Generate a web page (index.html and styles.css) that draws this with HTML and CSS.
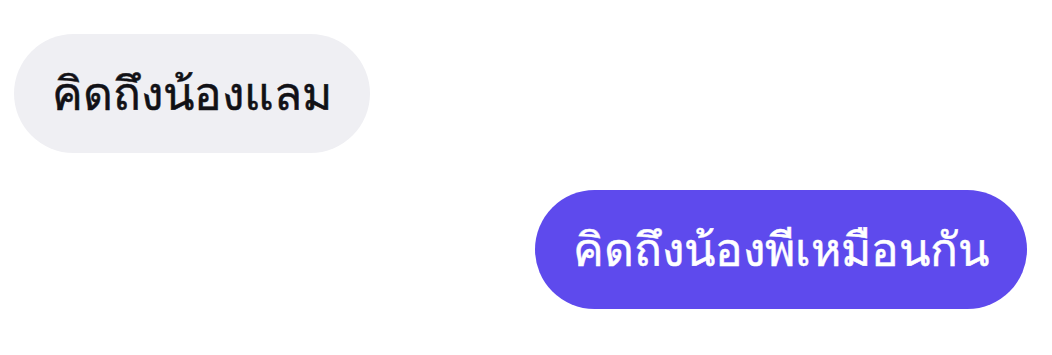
FILE: index.html
```html
<!DOCTYPE html>
<html lang="th">
<head>
    <meta charset="UTF-8">
    <meta name="viewport" content="width=device-width, initial-scale=1.0">
    <title>แชท</title>
    <link rel="stylesheet" href="styles.css">
</head>
<body>
    <div class="chat">
        <div class="msg msg-in">
            <div class="bubble">คิดถึงน้องแลม</div>
        </div>
        <div class="msg msg-out">
            <div class="bubble">คิดถึงน้องพีเหมือนกัน</div>
        </div>
    </div>
</body>
</html>
```

FILE: styles.css
```css
:root {
    --in-bg: #efeff3;
    --in-fg: #111116;
    --out-bg: #5e4aed;
    --out-fg: #ffffff;
}

body {
    margin: 0;
    background: #ffffff;
    font-family: "Noto Sans", sans-serif;
}

.chat {
    display: flex;
    flex-direction: column;
    gap: 37px;
    padding: 34px 25px 0 14px;
}

.msg {
    display: flex;
}

.msg-out {
    justify-content: flex-end;
}

.bubble {
    box-sizing: border-box;
    height: 119px;
    display: flex;
    align-items: center;
    padding: 0 38px;
    border-radius: 60px;
    font-size: 46px;
    font-weight: 400;
    -webkit-text-stroke: 0.5px currentColor;
    white-space: nowrap;
}

.msg-in .bubble {
    background: var(--in-bg);
    color: var(--in-fg);
}

.msg-out .bubble {
    background: var(--out-bg);
    color: var(--out-fg);
}
```
